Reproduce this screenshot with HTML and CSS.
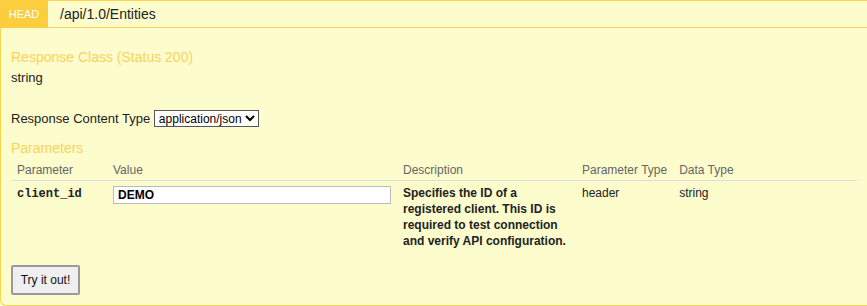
FILE: index.html
```html
<!DOCTYPE html>
<html lang="en">
<head>
    <meta charset="UTF-8">
    <meta name="viewport" content="width=device-width, initial-scale=1.0">
    <title>HEAD /api/1.0/Entities</title>
    <link rel="stylesheet" href="styles.css">
</head>
<body>
    <div class="operation">
        <div class="heading">
            <span class="method">HEAD</span>
            <span class="path">/api/1.0/Entities</span>
        </div>

        <div class="content">
            <h4>Response Class (Status 200)</h4>
            <div class="model">string</div>

            <div class="content-type">
                Response Content Type
                <select>
                    <option>application/json</option>
                </select>
            </div>

            <h4 class="params-title">Parameters</h4>
            <table class="params">
                <thead>
                    <tr>
                        <th class="col-name">Parameter</th>
                        <th class="col-value">Value</th>
                        <th class="col-desc">Description</th>
                        <th class="col-ptype">Parameter Type</th>
                        <th class="col-dtype">Data Type</th>
                    </tr>
                </thead>
                <tbody>
                    <tr>
                        <td class="code">client_id</td>
                        <td><input type="text" value="DEMO"></td>
                        <td class="desc">Specifies the ID of a registered client. This ID is required to test connection and verify API configuration.</td>
                        <td>header</td>
                        <td>string</td>
                    </tr>
                </tbody>
            </table>

            <button class="submit">Try it out!</button>
        </div>
    </div>
</body>
</html>
```

FILE: styles.css
```css
* {
    box-sizing: border-box;
}
body {
    margin: 0;
    font-family: 'Liberation Sans', Arial, sans-serif;
    color: #222;
    background: #fff;
    overflow: hidden;
}
.operation {
    width: 100%;
    background-color: #fcfccd;
}
.heading {
    display: flex;
    align-items: center;
    height: 28px;
    border-top: 1px solid #fcd54e;
    border-bottom: 1px solid #fcd54e;
}
.method {
    flex: 0 0 48px;
    height: 28px;
    margin-top: -1px;
    margin-bottom: -1px;
    background-color: #fccd3e;
    color: #fff;
    font-size: 11px;
    line-height: 28px;
    text-align: center;
}
.path {
    padding-left: 12px;
    font-size: 14px;
    color: #222;
}
.content {
    height: 278px;
    padding: 0 10px;
    border-left: 1px solid #fcd54e;
    border-bottom: 1px solid #fcd54e;
    border-bottom-left-radius: 6px;
}
h4 {
    margin: 0;
    font-size: 14px;
    font-weight: normal;
    color: #fdd25c;
    line-height: 18px;
}
.content > h4:first-child {
    padding-top: 20px;
}
.model {
    margin-top: 4px;
    font-size: 13px;
    line-height: 16px;
}
.content-type {
    margin-top: 24px;
    font-size: 13px;
    line-height: 18px;
}
.content-type select {
    font-family: 'Liberation Sans', Arial, sans-serif;
    font-size: 12px;
    height: 17px;
    padding: 0;
    border: 1px solid #555;
    border-radius: 0;
    background: #fff;
    color: #000;
}
.params-title {
    margin-top: 11px;
    margin-bottom: 6px;
}
.params {
    width: 100%;
    border-collapse: collapse;
    font-size: 12px;
}
.params th {
    padding: 0 6px 2px;
    text-align: left;
    font-weight: normal;
    color: #666;
    border-bottom: 1px solid #ddd;
    line-height: 15px;
    white-space: nowrap;
}
.params td {
    padding: 4px 6px 0;
    vertical-align: top;
    line-height: 16px;
}
.col-name { width: 96px; }
.col-value { width: 290px; }
.col-desc { width: 179px; }
.col-ptype { width: 96px; }
.params td.code {
    font-family: 'Liberation Mono', 'DejaVu Sans Mono', monospace;
    font-weight: bold;
    font-size: 12px;
    padding-top: 5px;
}
.params input {
    width: 278px;
    height: 18px;
    margin-top: 1px;
    padding: 0 4px;
    border: 1px solid #bbb;
    font-family: 'Liberation Sans', Arial, sans-serif;
    font-size: 12px;
    font-weight: bold;
    color: #000;
    background: #fff;
}
.params td.desc {
    font-weight: bold;
}
.submit {
    display: block;
    margin-top: 16px;
    width: 69px;
    height: 30px;
    padding: 0;
    font-family: 'Liberation Sans', Arial, sans-serif;
    font-size: 12px;
    color: #111;
    background: #efefef;
    border: 2px solid #999;
    border-radius: 2px;
}
```
